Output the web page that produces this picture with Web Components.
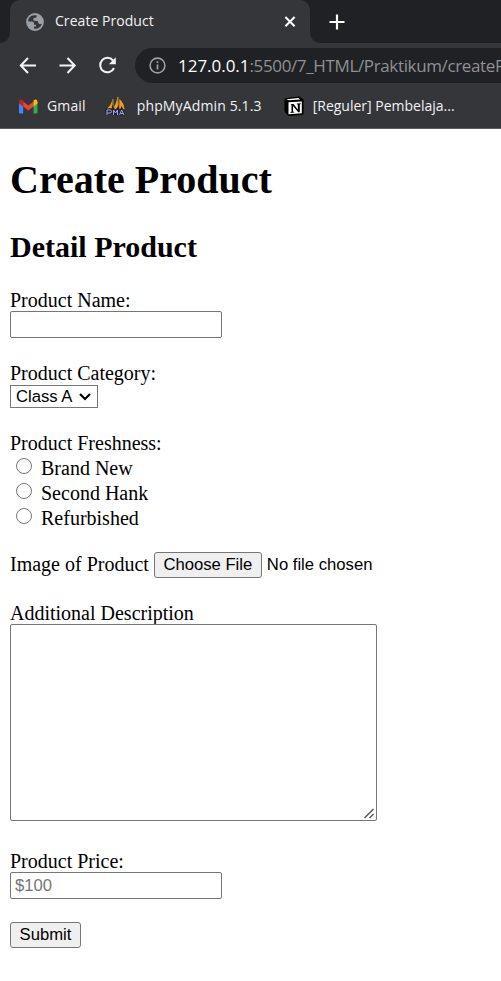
<!DOCTYPE html>
<html lang="en">
<head>
<meta charset="utf-8">
<title>Create Product</title>
<style>
body{margin:0;background:#fff;width:501px;height:981px;overflow:hidden}
</style>
</head>
<body>
<browser-chrome></browser-chrome>
<product-page></product-page>
<script>
function define(name, html) {
  const t = document.createElement('template');
  t.innerHTML = html;
  customElements.define(name, class extends HTMLElement {
    constructor() {
      super();
      this.attachShadow({mode: 'open'}).appendChild(t.content.cloneNode(true));
    }
  });
}

define('browser-tab', `
<style>
:host{display:flex;align-items:center;box-sizing:border-box;width:300px;height:43px;margin-left:10px;padding:0 12px 0 16px;background:#35363a;border-radius:10px 10px 0 0;position:relative;color:#f1f3f4;font:14px/20px "Open Sans","Noto Sans",sans-serif}
:host::before,:host::after{content:"";position:absolute;bottom:0;width:10px;height:10px}
:host::before{left:-10px;background:radial-gradient(circle at 0 0,#202124 9.5px,#35363a 10.2px)}
:host::after{right:-10px;background:radial-gradient(circle at 100% 0,#202124 9.5px,#35363a 10.2px)}
.t{flex:1;margin-left:11px;padding-bottom:2px;letter-spacing:.05px;white-space:nowrap}
svg{display:block}
</style>
<svg width="18" height="18" viewBox="0 0 18 18"><circle cx="9" cy="9" r="8.900" fill="#9aa0a6"/><path d="M9.500 2.200C6.500 2 4 3 2.500 5.800L2.200 8.500h3.600c1.500 0 2.200.8 2.200 2v1.300h2v1.700H8v2.200c3.700.6 7-1.500 7.800-5-1 .5-2.500.5-3.300-.5-.7-.9-.3-1.700-1.200-2.100-1.500-.4-3.100.1-3.800-.8-.7-1.200.2-2.300 1.300-2.500l1.500-.1c0-1 .4-1.700 1-2z" fill="#35363a"/></svg>
<span class="t"><slot></slot></span>
<svg width="16" height="16" viewBox="0 0 16 16"><path d="M3.400 3l9.200 9.200M12.600 3L3.400 12.200" stroke="#fff" stroke-width="2"/></svg>
`);

define('address-bar', `
<style>
:host{display:flex;align-items:center;box-sizing:border-box;height:35px;width:366px;padding-left:14px;background:#202124;border-radius:18px 0 0 18px;overflow:hidden;color:#8e9195;font:17px/24px "Open Sans","Noto Sans",sans-serif;white-space:nowrap}
svg{flex:none;margin-right:12px}
.u{letter-spacing:-.36px;padding-top:1px}
::slotted(b){font-weight:400;color:#fff;letter-spacing:-.03px}
</style>
<svg width="17" height="17" viewBox="0 0 17 17"><circle cx="8.500" cy="8.500" r="7.400" fill="none" stroke="#9aa0a6" stroke-width="1.600"/><path d="M8.500 7.500v5M8.500 4.200v1.900" stroke="#9aa0a6" stroke-width="1.800"/></svg>
<span class="u"><slot></slot></span>
`);

define('bookmark-item', `
<style>
:host{display:flex;align-items:center;color:#f1f3f4;font:14px/20px "Open Sans","Noto Sans",sans-serif;white-space:nowrap}
::slotted(svg){display:block;flex:none;margin-right:var(--gap,9px)}
</style>
<slot name="icon"></slot><span><slot></slot></span>
`);

define('browser-chrome', `
<style>
:host{display:block;height:129px;background:#35363a;box-sizing:border-box;border-bottom:1px solid #5b5c60}
.strip{display:flex;align-items:center;height:43px;background:#202124}
.strip>svg{margin-left:19px}
.nav{display:flex;align-items:center;height:45px}
.nav svg{flex:none}
.marks{display:flex;align-items:center;height:36px}
</style>
<div class="strip"><browser-tab>Create Product</browser-tab>
<svg width="16" height="16" viewBox="0 0 16 16"><path d="M8 .5v15M.5 8h15" stroke="#fff" stroke-width="2.200"/></svg></div>
<div class="nav">
<svg width="20" height="20" viewBox="0 0 20 20" style="margin-left:18px" fill="none" stroke="#f1f3f4" stroke-width="2"><path d="M18 9.500H3M10 2L2.800 9.500l7.200 7.500"/></svg>
<svg width="20" height="20" viewBox="0 0 20 20" style="margin-left:20px" fill="none" stroke="#f1f3f4" stroke-width="2"><path d="M1.500 9.500h15M9.500 2l7.200 7.500-7.200 7.500"/></svg>
<svg width="20" height="20" viewBox="0 0 20 20" style="margin:0 17px 0 20px"><path d="M15 4.500A7.200 7.200 0 1 0 16 12" fill="none" stroke="#f1f3f4" stroke-width="2"/><path d="M17.800 1.300v7h-7z" fill="#f1f3f4"/></svg>
<address-bar><b>127.0.0.1</b>:5500/7_HTML/Praktikum/createP</address-bar>
</div>
<div class="marks">
<bookmark-item style="margin-left:19px;letter-spacing:.15px"><svg slot="icon" width="19" height="15" viewBox="0 0 19 15"><path d="M0 3h4.200v11.500H1.300Q0 14.500 0 13.200z" fill="#4285f4"/><path d="M14.500 3h4v10.200q0 1.300-1.300 1.300h-2.700z" fill="#34a853"/><path d="M4.200 2.600l5.100 4 5.200-4v5l-5.200 4-5.100-4z" fill="#ea4335"/><path d="M0 3Q0 .5 2 .5q1 0 2.200 1.100v6L0 4.500z" fill="#c5221f"/><path d="M14.500 1.600Q16 .4 17 .6q1.500.3 1.500 2.400v1.500l-4 3.100z" fill="#fbbc04"/></svg>Gmail</bookmark-item>
<bookmark-item style="--gap:11px;margin-left:19px;letter-spacing:.13px"><svg slot="icon" width="21" height="20" viewBox="0 0 21 20"><path d="M7.500 3Q6.500 9 1 13.500q3-1.500 6-1.300zM12.500 0q-1 8-5 13.500L13 12.500zM14.500 3q4.500 4 5 10.200L14 12.500z" fill="#f89c0e"/><path d="M8 3v9M13 1v11" stroke="#d6a366" stroke-width=".8"/><g fill="none" stroke="#1d2147" stroke-width="3.200"><path d="M2 19v-5h3q1.500 0 1.500 1.500T5 17H2M8.500 19v-5l2 3 2-3v5M14.500 19l2.200-5 2.300 5M15.500 17.500h3"/></g><g fill="none" stroke="#a5a7c9" stroke-width="1"><path d="M2 19v-5h3q1.500 0 1.500 1.500T5 17H2M8.500 19v-5l2 3 2-3v5M14.500 19l2.200-5 2.300 5M15.500 17.500h3"/></g></svg>phpMyAdmin 5.1.3</bookmark-item>
<bookmark-item style="margin-left:22px;letter-spacing:0"><svg slot="icon" width="20" height="20" viewBox="0 0 20 20"><path d="M1 2.200L14.500.6Q15.500.4 16.300 1L19 3.200q.6.500.6 1.300v13q0 1.500-1.500 1.600L5.300 20q-1 0-1.700-.8L1 16Q.4 15.200.4 14V3.200q0-.8.6-1z" fill="#000"/><path d="M2.300 3.200l12-1.200 2 1.500-11.500.8z" fill="#fff"/><path d="M4.500 6.300l13.300-.8v11.700l-13.300 1z" fill="#fff"/><path d="M6.500 8h3.200l4.100 5.800V8.600l-1-.3v-.8l4-.2v.8l-1 .4v7.700h-1.500L9 9.900v5.700l1.300.3v.7l-3.800.3v-.8l1-.4V9z" fill="#000"/></svg>[Reguler] Pembelaja...</bookmark-item>
</div>
`);

define('text-box', `
<style>
:host{display:block;box-sizing:border-box;width:212px;height:27px;border:1px solid #767676;border-radius:2px;padding:0 4px;background:#fff;color:#757575;font:16.670px/25px "Liberation Sans",Arial,sans-serif;position:relative}
</style><slot></slot>
`);
define('push-button', `
<style>
:host{display:inline-block;box-sizing:border-box;height:26px;border:1px solid #767676;border-radius:3px;background:#efefef;text-align:center;color:#000;font:16.670px/23px "Liberation Sans",Arial,sans-serif;white-space:nowrap}
</style><slot></slot>
`);
define('select-box', `
<style>
:host{display:flex;align-items:center;box-sizing:border-box;width:88px;height:23px;border:1px solid #767676;padding-left:5px;background:#fff;color:#000;font:16.670px/21px "Liberation Sans",Arial,sans-serif;white-space:nowrap}
svg{margin-left:7px}
</style><slot></slot><svg width="12" height="9" viewBox="0 0 12 9"><path d="M1 2l5 5 5-5" fill="none" stroke="#000" stroke-width="2.100"/></svg>
`);
define('radio-option', `
<style>
:host{display:flex;height:25px;line-height:27px}
i{flex:none;box-sizing:border-box;width:16px;height:16px;border:1.250px solid #767676;border-radius:50%;margin:2.500px 9px 0 6px;background:#fff}
</style><i></i><span><slot></slot></span>
`);
define('form-field', `
<style>:host{display:block}.l{height:var(--label,23px);line-height:25px;white-space:nowrap}</style>
<div class="l"><slot name="label"></slot></div><slot></slot>
`);

define('product-page', `
<style>
:host{display:block;padding:28px 10px 0;color:#000;font:20px/23px "Liberation Serif","Times New Roman",serif}
h1{margin:0;font-size:40px;line-height:46px}
h2{margin:27px 0 0;font-size:30px;line-height:34px;height:34px}
form-field{margin-top:23px}
.file{display:flex;align-items:flex-start;margin-top:22px;height:26px;line-height:25px;white-space:nowrap}
.file push-button{width:108px;margin:0 5px 0 5px}
.none{font:16.670px/26px "Liberation Sans",Arial,sans-serif}
text-box.area{width:367px;height:197px}
text-box svg{position:absolute;right:1px;bottom:1px}
</style>
<h1>Create Product</h1>
<h2>Detail Product</h2>
<form-field style="margin-top:24px"><span slot="label">Product Name:</span><text-box></text-box></form-field>
<form-field style="--label:24px"><span slot="label">Product Category:</span><select-box>Class A</select-box></form-field>
<form-field style="--label:24px"><span slot="label">Product Freshness:</span><radio-option>Brand New</radio-option><radio-option>Second Hank</radio-option><radio-option>Refurbished</radio-option></form-field>
<div class="file"><span>Image of Product</span><push-button>Choose File</push-button><span class="none">No file chosen</span></div>
<form-field><span slot="label">Additional Description</span><text-box class="area"><svg width="12" height="12" viewBox="0 0 12 12"><path d="M1.500 11L10.500 2M6.500 11l4-4" stroke="#555" stroke-width="1.500"/></svg></text-box></form-field>
<form-field style="margin-top:28px"><span slot="label">Product Price:</span><text-box>$100</text-box></form-field>
<push-button style="width:71px;margin-top:23px">Submit</push-button>
`);
</script>
</body>
</html>
